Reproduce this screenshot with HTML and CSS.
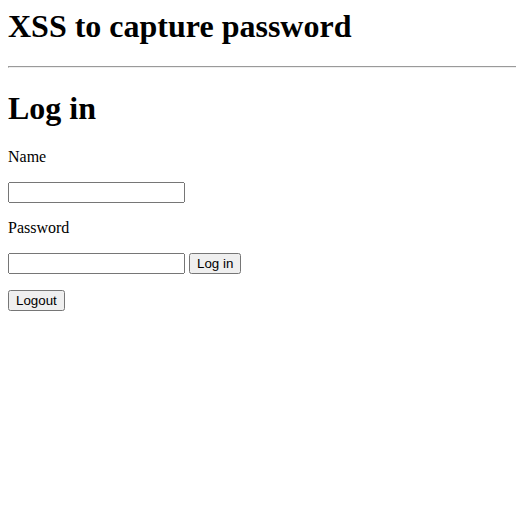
FILE: index.html
```html
<!DOCTYPE html>
<html>
<head>
<meta charset="utf-8">
<title>XSS to capture password</title>
<link rel="stylesheet" href="styles.css">
</head>
<body class="page">
<h1 class="title">XSS to capture password</h1>
<hr class="rule">
<h1 class="subtitle">Log in</h1>
<form class="login">
<p class="label">Name</p>
<p class="field"><input class="text" type="text"></p>
<p class="label">Password</p>
<p class="field"><input class="text" type="password"> <button class="btn" type="button">Log in</button></p>
</form>
<form class="logout">
<p class="field"><button class="btn" type="button">Logout</button></p>
</form>
</body>
</html>
```
FILE: styles.css
```css
.page {
  margin: 8px;
  font-family: "Liberation Serif", "Times New Roman", serif;
  font-size: 16px;
  color: #000;
  background: #fff;
}
.title {
  margin-top: 0;
}
.rule {
  margin: 8px -8px 8px 0;
  width: auto;
}
.text {
  width: 169px;
}
.text, .btn {
  font-family: "Liberation Sans", Arial, sans-serif;
  font-size: 13.333px;
}
```
